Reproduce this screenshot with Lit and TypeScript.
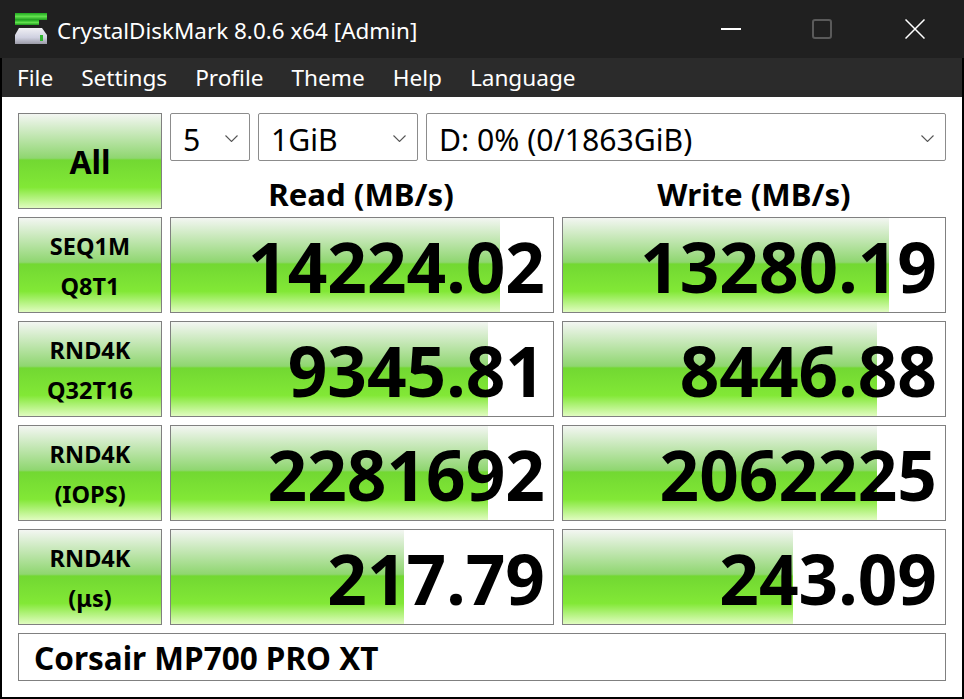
import { LitElement, html, css, svg } from "lit";
import { customElement } from "lit/decorators.js";

const rows = [
  { a: "SEQ1M", b: "Q8T1", r: "14224.02", w: "13280.19", rp: 86, wp: 85.3 },
  { a: "RND4K", b: "Q32T16", r: "9345.81", w: "8446.88", rp: 83, wp: 82.3 },
  { a: "RND4K", b: "(IOPS)", r: "2281692", w: "2062225", rp: 83, wp: 82.3 },
  { a: "RND4K", b: "(μs)", r: "217.79", w: "243.09", rp: 61, wp: 60.3 },
];

const chevron = svg`<svg class="chev" width="13" height="7" viewBox="0 0 13 7"><path d="M.5 .5 L6.5 6.5 L12.5 .5" fill="none" stroke="#555" stroke-width="1.1"/></svg>`;

@customElement("app-root")
export class AppRoot extends LitElement {
  static styles = css`
    :host { display: block; width: 964px; height: 699px; background: #000; font-family: "Noto Sans", "Open Sans", sans-serif; overflow: hidden; }
    .title { height: 58px; background: #202020; display: flex; align-items: center; color: #fff; }
    .logo { margin-left: 15px; margin-top: -1px; }
    .tt { margin-left: 10px; font-size: 22.45px; flex: 1; white-space: nowrap; padding-top: 3px; }
    .winbtns { display: flex; align-items: center; margin-right: 39px; }
    .b1 { margin-right: 71px; }
    .b2 { margin-right: 73px; }
    .menu { height: 39px; background: #2b2b2b; margin: 0 2px; display: flex; align-items: center; color: #fff; font-size: 22.6px; padding-left: 15px; gap: 28px; box-sizing: border-box; }
    .body { height: 600px; margin: 0 2px; background: #fff; box-sizing: border-box; padding: 16px 16px 0 16px; display: grid; grid-template-columns: 144px 1fr; column-gap: 8px; row-gap: 8px; grid-template-rows: 96px 96px 96px 96px 96px 48px; }
    .cell { box-sizing: border-box; border: 1px solid #808080; }
    .grad { background: linear-gradient(to bottom, #f3f6f2 0%, #8fd670 47%, #72d832 49%, #82e836 78%, #e0fcc0 100%); }
    .btn { display: flex; flex-direction: column; align-items: center; justify-content: center; font-weight: 700; color: #000; font-size: 23.5px; line-height: 40px; padding-top: 2px; }
    .btn.all { font-size: 32px; }
    .top { display: flex; flex-direction: column; }
    .selects { display: flex; gap: 8px; height: 48px; }
    .sel { box-sizing: border-box; height: 48px; border: 1px solid #8c8c8c; border-radius: 2px; background: #fff; display: flex; align-items: center; justify-content: space-between; font-size: 30.2px; line-height: 42px; color: #000; padding: 5px 11px 0 12px; }
    .chev { margin-top: -3px; }
    .s1 { width: 80px; } .s2 { width: 160px; } .s3 { flex: 1; }
    .heads { display: grid; grid-template-columns: 1fr 1fr; gap: 8px; height: 48px; font-weight: 700; font-size: 31.2px; text-align: center; line-height: 66px; color: #000; }
    .heads > div:first-child { margin-right: 2px; }
    .pair { display: grid; grid-template-columns: 1fr 1fr; gap: 8px; }
    .val { position: relative; background: #fff; display: flex; align-items: center; justify-content: flex-end; padding: 3px 8px 0 0; overflow: hidden; }
    .fill { position: absolute; left: 0; top: 0; bottom: 0; }
    .num { position: relative; font-weight: 700; font-size: 69.3px; line-height: 1; color: #000; white-space: nowrap; }
    .foot { grid-column: 1 / -1; display: flex; align-items: center; font-weight: 700; font-size: 31.5px; padding-left: 15px; color: #000; }
  `;

  render() {
    return html`
      <div class="title">
        <svg class="logo logoimg" width="32" height="32" viewBox="0 0 32 32">
          <defs>
            <linearGradient id="g" x1="0" y1="0" x2="0" y2="1"><stop offset="0" stop-color="#1fa81f"/><stop offset=".5" stop-color="#62e04e"/><stop offset="1" stop-color="#1c9a1c"/></linearGradient>
            <linearGradient id="d" x1="0" y1="0" x2="0" y2="1"><stop offset="0" stop-color="#f0f0f4"/><stop offset=".6" stop-color="#cfd0e0"/><stop offset="1" stop-color="#9a9aa6"/></linearGradient>
          </defs>
          <rect x="0" y="0" width="32" height="7" fill="url(#g)"/>
          <rect x="0" y="7" width="24" height="5" fill="url(#g)"/>
          <path d="M4 15 H27 L32 22 V31 H0 V22 Z" fill="url(#d)"/>
          <rect x="25" y="22" width="3" height="6" fill="#2fb52f"/>
        </svg>
        <div class="tt">CrystalDiskMark 8.0.6 x64 [Admin]</div>
        <div class="winbtns">
          <svg class="b1" width="20" height="20" viewBox="0 0 20 20"><rect y="9" width="20" height="2" fill="#fff"/></svg>
          <svg class="b2" width="20" height="20" viewBox="0 0 20 20"><rect x="1" y="1" width="18" height="18" rx="2" fill="none" stroke="#5a5a5a" stroke-width="2"/></svg>
          <svg width="20" height="20" viewBox="0 0 20 20"><path d="M.5 .5 L19.5 19.5 M19.5 .5 L.5 19.5" stroke="#fff" stroke-width="1.5" fill="none"/></svg>
        </div>
      </div>
      <div class="menu">
        <span>File</span><span>Settings</span><span>Profile</span><span>Theme</span><span>Help</span><span>Language</span>
      </div>
      <div class="body">
        <div class="cell grad btn all">All</div>
        <div class="top">
          <div class="selects">
            <div class="sel s1">5 ${chevron}</div>
            <div class="sel s2">1GiB ${chevron}</div>
            <div class="sel s3">D: 0% (0/1863GiB) ${chevron}</div>
          </div>
          <div class="heads"><div>Read (MB/s)</div><div>Write (MB/s)</div></div>
        </div>
        ${rows.map(
          (r) => html`
            <div class="cell grad btn"><div>${r.a}</div><div>${r.b}</div></div>
            <div class="pair">
              <div class="cell val"><div class="fill grad" style="width:${r.rp}%"></div><div class="num">${r.r}</div></div>
              <div class="cell val"><div class="fill grad" style="width:${r.wp}%"></div><div class="num">${r.w}</div></div>
            </div>
          `
        )}
        <div class="cell foot">Corsair MP700 PRO XT</div>
      </div>
    `;
  }
}
